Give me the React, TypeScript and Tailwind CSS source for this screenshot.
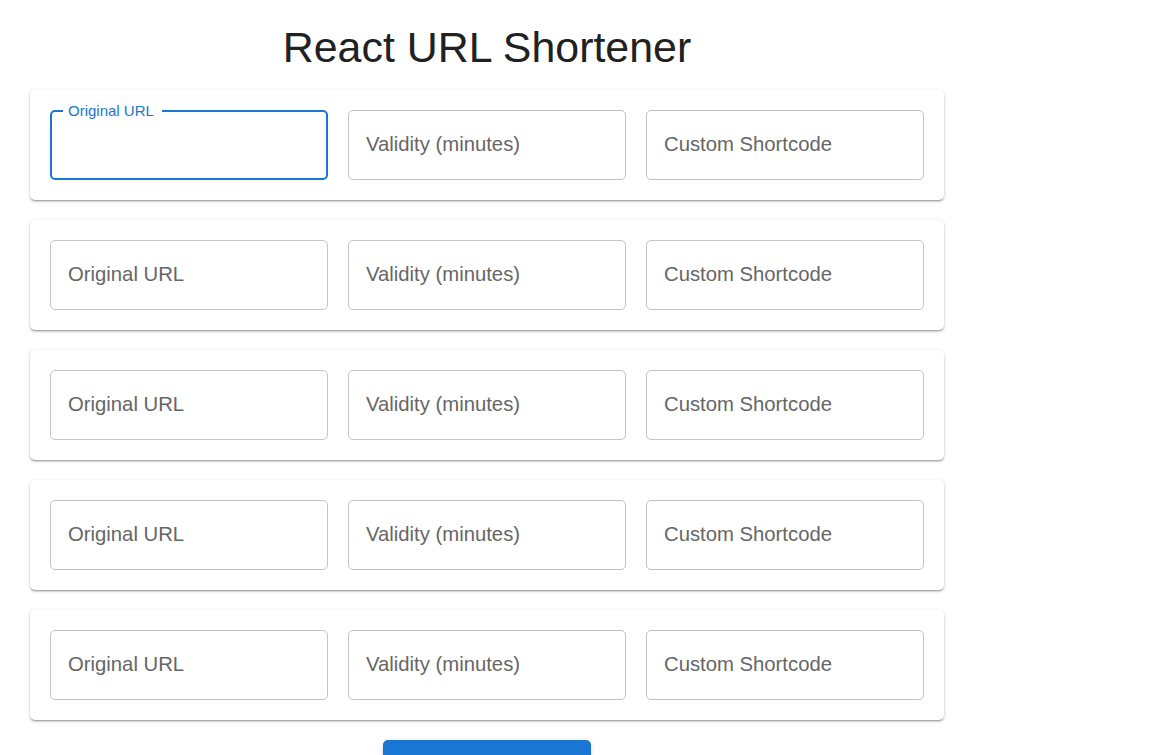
import React from 'react';

const rows = [0, 1, 2, 3, 4];
const fields = ['Original URL', 'Validity (minutes)', 'Custom Shortcode'];

const Field: React.FC<{ label: string; focused?: boolean }> = ({ label, focused }) => {
  if (focused) {
    return (
      <div className="relative h-[70px] rounded-[5px] border-2 border-[#1976d2]">
        <span className="absolute -top-[10px] left-[11px] bg-white pl-[5px] pr-[8px] text-[15px] leading-[18px] text-[#1976d2]">
          {label}
        </span>
      </div>
    );
  }
  return (
    <div className="flex h-[70px] items-center rounded-[5px] border border-[#c4c4c4] pb-[1px] pl-[17px] text-[20.3px] text-[#666666]">
      {label}
    </div>
  );
};

export default function App() {
  return (
    <div className="min-h-screen bg-white" style={{ fontFamily: '"Liberation Sans", Arial, sans-serif' }}>
      <div className="ml-[30px] w-[914px]">
        <h1 className="pt-[21px] pb-[17px] text-center text-[42.9px] leading-[52px] text-[#212121]">
          React URL Shortener
        </h1>
        <div className="flex flex-col gap-[20px]">
          {rows.map((r) => (
            <div
              key={r}
              className="grid grid-cols-3 gap-[20px] rounded-[5px] bg-white p-[20px] shadow-[0_2px_2px_-1px_rgba(0,0,0,0.25),0_1px_2px_0_rgba(0,0,0,0.16),0_1px_4px_0_rgba(0,0,0,0.12)]"
            >
              {fields.map((f, i) => (
                <Field key={f} label={f} focused={r === 0 && i === 0} />
              ))}
            </div>
          ))}
        </div>
        <div className="mt-[20px] flex justify-center">
          <button className="flex h-[60px] w-[208px] items-start justify-center rounded-[5px] bg-[#1976d2] pt-[18px] text-[17.5px] font-bold uppercase leading-[30px] text-white shadow-[0_3px_1px_-2px_rgba(0,0,0,0.2),0_2px_2px_0_rgba(0,0,0,0.14),0_1px_5px_0_rgba(0,0,0,0.12)]">
            Shorten URLs
          </button>
        </div>
      </div>
    </div>
  );
}
